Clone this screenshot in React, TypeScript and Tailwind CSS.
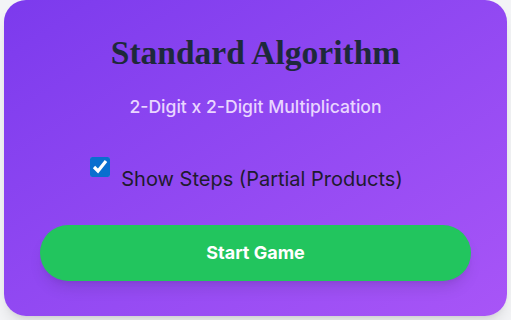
import React, { useState } from 'react';

const App: React.FC = () => {
  const [showSteps, setShowSteps] = useState<boolean>(true);

  return (
    <div className="min-h-screen bg-gray-100 px-1 pb-1" style={{ fontFamily: 'Inter, "Noto Sans", sans-serif' }}>
      <div className="h-[316px] rounded-[22px] bg-gradient-to-br from-[#7c3aed] to-[#a855f7] shadow-lg px-9 pt-[33px] flex flex-col items-center">
        <h1
          className="text-[33.5px] leading-[40px] font-bold text-[#1e293b]"
          style={{ fontFamily: '"Liberation Serif", "Times New Roman", serif' }}
        >
          Standard Algorithm
        </h1>
        <p className="mt-[22px] text-[17.6px] leading-6 font-medium text-[#e9d5ff]">2-Digit x 2-Digit Multiplication</p>

        <label className="mt-[36px] mr-[18px] flex items-start gap-[11px] cursor-pointer">
          <input
            type="checkbox"
            checked={showSteps}
            onChange={(e) => setShowSteps(e.target.checked)}
            className="mt-[2px] w-5 h-5 accent-[#0a6fcf]"
          />
          <span className="mt-[10px] text-[20px] leading-7 text-[#1e1b2e]">Show Steps (Partial Products)</span>
        </label>

        <button className="mt-[32px] w-full h-14 rounded-full bg-[#22c55e] text-white text-lg font-bold shadow-lg">
          Start Game
        </button>
      </div>
    </div>
  );
};

export default App;
